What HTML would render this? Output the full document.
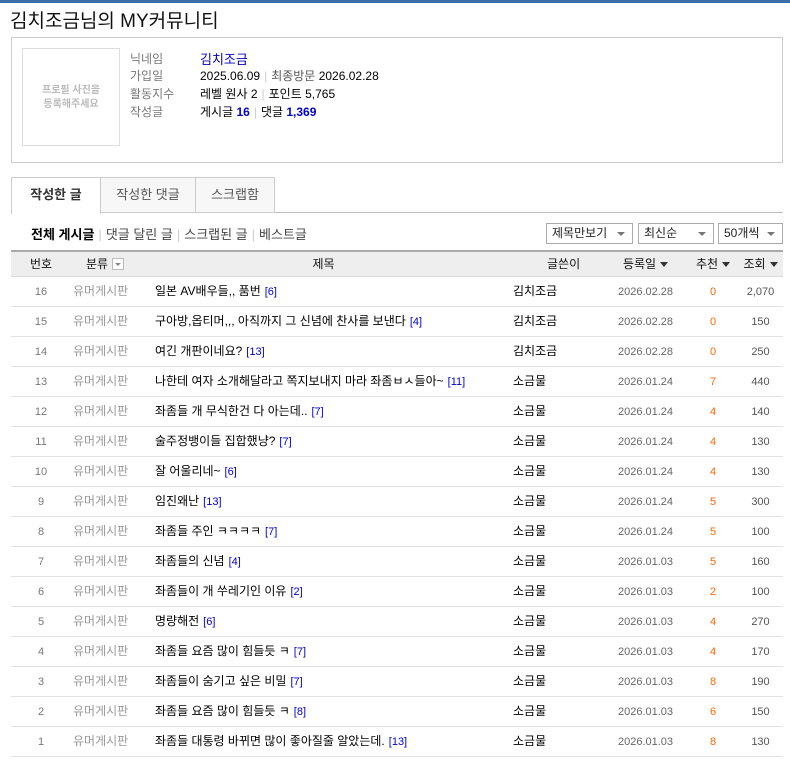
<!DOCTYPE html>
<html><head><meta charset="utf-8"><style>
*{margin:0;padding:0;box-sizing:border-box}
body{width:790px;height:762px;background:#fff;font-family:"Liberation Sans","Noto Sans CJK KR",sans-serif;font-size:12px;color:#000;position:relative;overflow:hidden}
.a{position:absolute;white-space:nowrap}
.topbar{left:0;top:0;width:790px;height:3px;background:#3a6ea5}
.title{left:10px;top:6px;font-size:19px;color:#111}
.box{left:11px;top:37px;width:772px;height:126px;border:1px solid #ccc}
.photo{left:22px;top:48px;width:98px;height:98px;border:1px solid #ddd;color:#bbb;font-size:10px;text-align:center;line-height:14px;padding-top:35px;font-weight:bold}
.lb{color:#777;font-size:12px}
.sep{color:#ccc;margin:0 4px}
.blue{color:#00c}
.tab{top:177px;height:36px;border:1px solid #ccc;background:#f7f7f7;color:#555;font-size:13px;text-align:center;line-height:33px}
.tab.on{background:#fff;border-bottom:none;color:#333;font-weight:bold;height:37px}
.sub{top:224px;left:31px;font-size:13px;color:#444}
.sel{top:223px;height:21px;border:1px solid #aaa;font-size:12px;line-height:19px;padding-left:5px;color:#222;background:#fff}
.sel:after{content:"";position:absolute;right:7px;top:8px;border:4px solid transparent;border-top:4px solid #777}
table{position:absolute;left:11px;top:250px;width:772px;border-collapse:collapse}
th{height:25px;background:#eee;font-weight:normal;font-size:12px;border-top:2px solid #aaa;border-bottom:1px solid #ddd;color:#111;padding:0}
td{height:30px;border-bottom:1px solid #e2e2e2;font-size:12px;padding:0;vertical-align:middle;line-height:14px}
.n{text-align:center;color:#777;font-size:11px}
.c{color:#999;text-align:left;padding-left:2px}
.t{padding-left:11px}
.cm{color:#00c;font-size:11px;margin-left:4px}
.w{padding-left:10px}
.d{text-align:center;color:#666;font-size:11px;padding-top:2px}
.r{text-align:center;color:#f60;font-size:11px;padding-top:2px}
.v{text-align:center;color:#555;font-size:11px;padding-top:2px}
.n{padding-top:2px}
.tri{display:inline-block;border:4px solid transparent;border-top:5px solid #333;vertical-align:-3px;margin-left:4px}
.fb{display:inline-block;width:12px;height:12px;border:1px solid #bbb;background:#fff;vertical-align:-2px;margin-left:4px;position:relative}
.fb:after{content:"";position:absolute;left:2px;top:4px;border:3px solid transparent;border-top:3px solid #888}
</style></head><body>
<div class="a topbar"></div>
<div class="a title">김치조금님의 MY커뮤니티</div>
<div class="a box"></div>
<div class="a photo">프로필 사진을<br>등록해주세요</div>
<div class="a lb" style="left:130px;top:50px">닉네임</div>
<div class="a blue" style="left:200px;top:49px;font-size:13px">김치조금</div>
<div class="a lb" style="left:130px;top:67px">가입일</div>
<div class="a" style="left:200px;top:67px">2025.06.09<span class="sep">|</span><span style="color:#555">최종방문</span> 2026.02.28</div>
<div class="a lb" style="left:130px;top:85px">활동지수</div>
<div class="a" style="left:200px;top:85px">레벨 원사 2<span class="sep">|</span>포인트 5,765</div>
<div class="a lb" style="left:130px;top:103px">작성글</div>
<div class="a" style="left:200px;top:103px">게시글 <b class="blue">16</b><span class="sep">|</span>댓글 <b class="blue">1,369</b></div>

<div class="a" style="left:11px;top:212px;width:772px;height:1px;background:#bbb"></div>
<div class="a tab on" style="left:11px;width:90px">작성한 글</div>
<div class="a tab" style="left:100px;width:96px">작성한 댓글</div>
<div class="a tab" style="left:195px;width:80px">스크랩함</div>

<div class="a sub"><b style="color:#000">전체 게시글</b><span class="sep">|</span>댓글 달린 글<span class="sep">|</span>스크랩된 글<span class="sep">|</span>베스트글</div>
<div class="a sel" style="left:546px;width:87px">제목만보기</div>
<div class="a sel" style="left:638px;width:76px">최신순</div>
<div class="a sel" style="left:718px;width:65px">50개씩</div>

<table>
<tr><th style="width:60px">번호</th><th style="width:73px;text-align:left;padding-left:15px">분류<span class="fb"></span></th><th style="width:359px">제목</th><th style="width:100px;text-align:left;padding-left:44px">글쓴이</th><th style="width:85px">등록일<span class="tri"></span></th><th style="width:50px">추천<span class="tri"></span></th><th>조회<span class="tri"></span></th></tr>
<tr><td class="n">16</td><td class="c">유머게시판</td><td class="t">일본 AV배우들,, 품번<span class="cm">[6]</span></td><td class="w">김치조금</td><td class="d">2026.02.28</td><td class="r">0</td><td class="v">2,070</td></tr>
<tr><td class="n">15</td><td class="c">유머게시판</td><td class="t">구아방,옵티머,,, 아직까지 그 신념에 찬사를 보낸다<span class="cm">[4]</span></td><td class="w">김치조금</td><td class="d">2026.02.28</td><td class="r">0</td><td class="v">150</td></tr>
<tr><td class="n">14</td><td class="c">유머게시판</td><td class="t">여긴 개판이네요?<span class="cm">[13]</span></td><td class="w">김치조금</td><td class="d">2026.02.28</td><td class="r">0</td><td class="v">250</td></tr>
<tr><td class="n">13</td><td class="c">유머게시판</td><td class="t">나한테 여자 소개해달라고 쪽지보내지 마라 좌좀ㅂㅅ들아~<span class="cm">[11]</span></td><td class="w">소금물</td><td class="d">2026.01.24</td><td class="r">7</td><td class="v">440</td></tr>
<tr><td class="n">12</td><td class="c">유머게시판</td><td class="t">좌좀들 개 무식한건 다 아는데..<span class="cm">[7]</span></td><td class="w">소금물</td><td class="d">2026.01.24</td><td class="r">4</td><td class="v">140</td></tr>
<tr><td class="n">11</td><td class="c">유머게시판</td><td class="t">술주정뱅이들 집합했냥?<span class="cm">[7]</span></td><td class="w">소금물</td><td class="d">2026.01.24</td><td class="r">4</td><td class="v">130</td></tr>
<tr><td class="n">10</td><td class="c">유머게시판</td><td class="t">잘 어울리네~<span class="cm">[6]</span></td><td class="w">소금물</td><td class="d">2026.01.24</td><td class="r">4</td><td class="v">130</td></tr>
<tr><td class="n">9</td><td class="c">유머게시판</td><td class="t">임진왜난<span class="cm">[13]</span></td><td class="w">소금물</td><td class="d">2026.01.24</td><td class="r">5</td><td class="v">300</td></tr>
<tr><td class="n">8</td><td class="c">유머게시판</td><td class="t">좌좀들 주인 ㅋㅋㅋㅋ<span class="cm">[7]</span></td><td class="w">소금물</td><td class="d">2026.01.24</td><td class="r">5</td><td class="v">100</td></tr>
<tr><td class="n">7</td><td class="c">유머게시판</td><td class="t">좌좀들의 신념<span class="cm">[4]</span></td><td class="w">소금물</td><td class="d">2026.01.03</td><td class="r">5</td><td class="v">160</td></tr>
<tr><td class="n">6</td><td class="c">유머게시판</td><td class="t">좌좀들이 개 쑤레기인 이유<span class="cm">[2]</span></td><td class="w">소금물</td><td class="d">2026.01.03</td><td class="r">2</td><td class="v">100</td></tr>
<tr><td class="n">5</td><td class="c">유머게시판</td><td class="t">명량해전<span class="cm">[6]</span></td><td class="w">소금물</td><td class="d">2026.01.03</td><td class="r">4</td><td class="v">270</td></tr>
<tr><td class="n">4</td><td class="c">유머게시판</td><td class="t">좌좀들 요즘 많이 힘들듯 ㅋ<span class="cm">[7]</span></td><td class="w">소금물</td><td class="d">2026.01.03</td><td class="r">4</td><td class="v">170</td></tr>
<tr><td class="n">3</td><td class="c">유머게시판</td><td class="t">좌좀들이 숨기고 싶은 비밀<span class="cm">[7]</span></td><td class="w">소금물</td><td class="d">2026.01.03</td><td class="r">8</td><td class="v">190</td></tr>
<tr><td class="n">2</td><td class="c">유머게시판</td><td class="t">좌좀들 요즘 많이 힘들듯 ㅋ<span class="cm">[8]</span></td><td class="w">소금물</td><td class="d">2026.01.03</td><td class="r">6</td><td class="v">150</td></tr>
<tr><td class="n">1</td><td class="c">유머게시판</td><td class="t">좌좀들 대통령 바뀌면 많이 좋아질줄 알았는데.<span class="cm">[13]</span></td><td class="w">소금물</td><td class="d">2026.01.03</td><td class="r">8</td><td class="v">130</td></tr>
</table>
</body></html>
